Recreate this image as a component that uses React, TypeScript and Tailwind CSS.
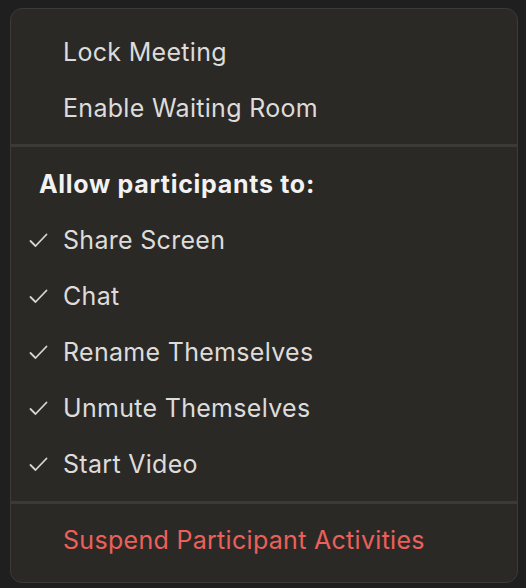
import { ReactNode } from 'react';

function Check() {
  return (
    <svg width="19" height="15" viewBox="0 0 19 15" fill="none" aria-hidden="true">
      <path d="M1.5 8L6.5 13L17.5 1.5" stroke="#d6d5d3" strokeWidth="1.8" strokeLinecap="round" strokeLinejoin="round" />
    </svg>
  );
}

function Row({ checked, children, className = '' }: { checked?: boolean; children: ReactNode; className?: string }) {
  return (
    <div className="flex h-[56px] items-center">
      <div className="flex w-[52px] justify-end pr-[15px]">{checked ? <Check /> : null}</div>
      <span className={`text-[25px] leading-none tracking-[0.3px] ${className}`}>{children}</span>
    </div>
  );
}

const allowed = ['Share Screen', 'Chat', 'Rename Themselves', 'Unmute Themselves', 'Start Video'];

export default function App() {
  return (
    <div className="h-[588px] w-[526px] bg-[#1f1f1f] pt-[8px] pl-[10px] font-['Inter','Liberation_Sans',sans-serif]">
      <div className="w-[508px] overflow-hidden rounded-[12px] border border-[#3b3a38] bg-[#2b2926] text-[#dddcda]">
        <div className="pt-[15px] pb-[8px]">
          <Row>Lock Meeting</Row>
          <Row>Enable Waiting Room</Row>
        </div>
        <div className="h-[3px] bg-[#3c3a37]" />
        <div className="pt-[9px] pb-[9px]">
          <div className="flex h-[56px] items-center pl-[28px]">
            <span className="text-[25px] font-bold leading-none tracking-[0.7px] text-[#f2f2f2]">Allow participants to:</span>
          </div>
          {allowed.map((label) => (
            <Row key={label} checked>
              {label}
            </Row>
          ))}
        </div>
        <div className="h-[3px] bg-[#3c3a37]" />
        <div className="pt-[8px] pb-[14px]">
          <Row className="text-[#ec605b]">Suspend Participant Activities</Row>
        </div>
      </div>
    </div>
  );
}
